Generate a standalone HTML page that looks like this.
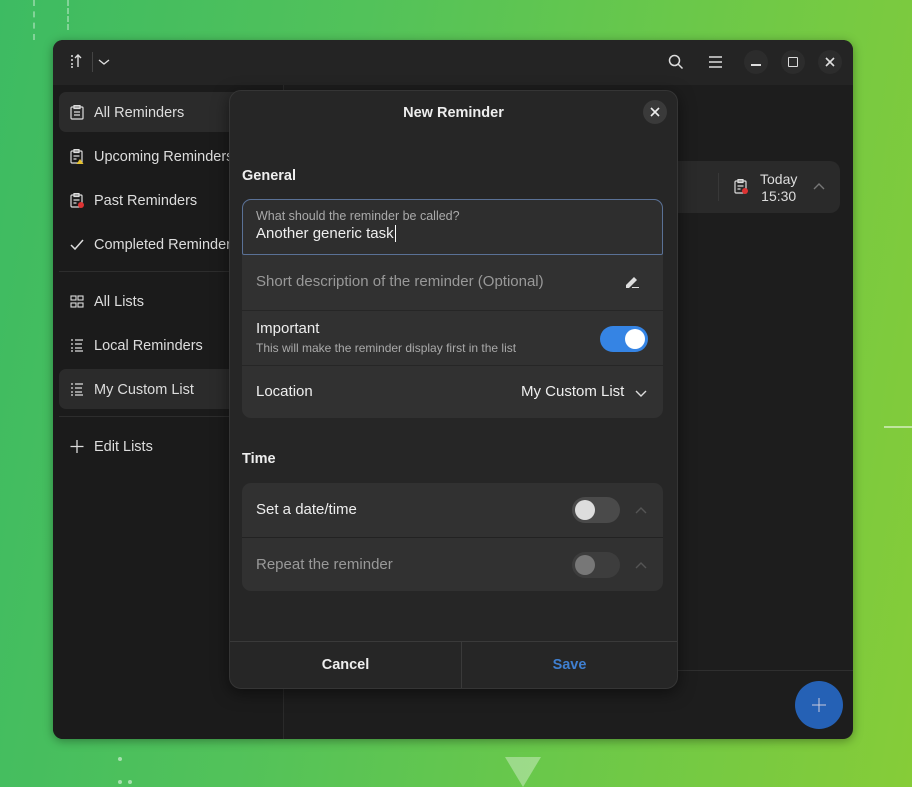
<!DOCTYPE html>
<html><head><meta charset="utf-8"><style>
*{box-sizing:border-box;margin:0;padding:0}
body{width:912px;height:787px;overflow:hidden;position:relative;font-family:"Liberation Sans","DejaVu Sans",sans-serif;background:linear-gradient(100deg,#3dbb62 0%,#52c25a 35%,#6ac84a 65%,#86cc38 100%);color:#fff}
.a{position:absolute}
.win{left:53px;top:40px;width:800px;height:699px;background:#1d1d1d;border-radius:10px;overflow:hidden;box-shadow:0 2px 10px rgba(0,0,0,.35)}
.hdr{left:0;top:0;width:800px;height:45px;background:#242424}
.side{left:0;top:45px;width:231px;height:654px;background:#1b1b1b;border-right:1px solid #2a2a2a}
.si{position:absolute;left:6px;width:224px;height:40px;border-radius:7px;font-size:14.5px;color:#ddd;line-height:42px;padding-left:35px}
.si.sel{background:#2b2b2b}
.ic{position:absolute;left:11px;top:13px;width:14px;height:15px}
.sep{position:absolute;left:6px;width:224px;height:1px;background:#2d2d2d}
.hb{position:absolute;width:24px;height:24px;border-radius:12px;background:#2c2c2c;top:10px}
.dlg{left:229px;top:90px;width:449px;height:599px;background:#262626;border-radius:12px;border:1px solid #353535;box-shadow:0 4px 16px rgba(0,0,0,.5)}
.card{position:absolute;left:13px;width:421px;background:#313131;border-radius:9px}
.row{position:absolute;left:0;width:421px;border-top:1px solid #262626}
.lbl{position:absolute;left:14px;font-size:15px;color:#eee}
.tog{position:absolute;width:48px;height:26px;border-radius:13px}
.knob{position:absolute;top:3px;width:20px;height:20px;border-radius:10px}
</style></head><body>
<div class="a" style="left:33px;top:0;width:3px;height:40px;border-left:2px dashed rgba(255,255,255,.35)"></div>
<div class="a" style="left:67px;top:0;width:3px;height:30px;border-left:2px dashed rgba(255,255,255,.35)"></div>
<div class="a" style="left:884px;top:426px;width:28px;height:2px;background:rgba(255,255,255,.5)"></div>
<div class="a" style="left:505px;top:757px;width:0;height:0;border-left:18px solid transparent;border-right:18px solid transparent;border-top:30px solid rgba(255,255,255,.35)"></div>
<div class="a" style="left:118px;top:757px;width:4px;height:4px;border-radius:2px;background:rgba(255,255,255,.5)"></div>
<div class="a" style="left:118px;top:780px;width:4px;height:4px;border-radius:2px;background:rgba(255,255,255,.5)"></div>
<div class="a" style="left:128px;top:780px;width:4px;height:4px;border-radius:2px;background:rgba(255,255,255,.5)"></div>

<div class="a win">
 <div class="a hdr">
  <svg class="a" style="left:16px;top:14px" width="14" height="14" viewBox="0 0 14 14" fill="none" stroke="#ddd" stroke-width="1.4"><path d="M2 2h2M2 6h2M2 10h2M2 13h2M9 13V1M6 4l3-3 3 3"/></svg>
  <div class="a" style="left:39px;top:12px;width:1px;height:20px;background:#444"></div>
  <svg class="a" style="left:45px;top:17px" width="12" height="10" viewBox="0 0 12 10" fill="none" stroke="#ddd" stroke-width="1.4"><path d="M1 3l5 4 5-4"/></svg>
  <svg class="a" style="left:615px;top:14px" width="16" height="16" viewBox="0 0 16 16" fill="none" stroke="#ddd" stroke-width="1.5"><circle cx="6.5" cy="6.5" r="5"/><path d="M10 10l4.5 4.5"/></svg>
  <svg class="a" style="left:656px;top:16px" width="13" height="12" viewBox="0 0 13 12" fill="none" stroke="#ddd" stroke-width="1.4"><path d="M0 1h13M0 6h13M0 11h13"/></svg>
  <div class="hb" style="left:691px"><div class="a" style="left:7px;top:14px;width:10px;height:1.5px;background:#ddd"></div></div>
  <div class="hb" style="left:728px"><div class="a" style="left:7px;top:7px;width:10px;height:10px;border:1.5px solid #ddd;border-radius:1px"></div></div>
  <div class="hb" style="left:765px"><svg class="a" style="left:7px;top:7px" width="10" height="10" viewBox="0 0 10 10" stroke="#ddd" stroke-width="1.6"><path d="M1 1l8 8M9 1l-8 8"/></svg></div>
 </div>
 <div class="a side">
  <div class="si sel" style="top:7px"><svg class="ic" viewBox="0 0 14 15" fill="none" stroke="#ddd" stroke-width="1.2"><rect x="1" y="2" width="12" height="12" rx="1"/><rect x="4" y="0.5" width="6" height="3"/><path d="M4 7h6M4 10h6"/></svg>All Reminders</div>
  <div class="si" style="top:51px"><svg class="ic" viewBox="0 0 14 15" fill="none" stroke="#ddd" stroke-width="1.2"><rect x="1" y="2" width="11" height="12" rx="1"/><rect x="4" y="0.5" width="5" height="3"/><path d="M3.5 7h6M3.5 10h3"/><path d="M10 10l3.5 5h-7z" fill="#e5c230" stroke="none"/></svg>Upcoming Reminders</div>
  <div class="si" style="top:95px"><svg class="ic" viewBox="0 0 14 15" fill="none" stroke="#ddd" stroke-width="1.2"><rect x="1" y="2" width="11" height="12" rx="1"/><rect x="4" y="0.5" width="5" height="3"/><path d="M3.5 7h6M3.5 10h3"/><circle cx="11" cy="12" r="3" fill="#d33" stroke="none"/></svg>Past Reminders</div>
  <div class="si" style="top:139px"><svg class="ic" viewBox="0 0 14 15" fill="none" stroke="#ddd" stroke-width="1.5"><path d="M1 8l4 4 8-9"/></svg>Completed Reminders</div>
  <div class="sep" style="top:186px"></div>
  <div class="si" style="top:196px"><svg class="ic" viewBox="0 0 14 15" fill="none" stroke="#ddd" stroke-width="1.1"><rect x="1" y="2" width="5" height="4"/><rect x="8" y="2" width="5" height="4"/><rect x="1" y="9" width="5" height="4"/><rect x="8" y="9" width="5" height="4"/></svg>All Lists</div>
  <div class="si" style="top:240px"><svg class="ic" viewBox="0 0 14 15" fill="none" stroke="#ddd" stroke-width="1.2"><path d="M1 2h2M1 6h2M1 10h2M1 13h2M5 2h8M5 6h7M5 10h7M5 13h8"/></svg>Local Reminders</div>
  <div class="si sel" style="top:284px"><svg class="ic" viewBox="0 0 14 15" fill="none" stroke="#ddd" stroke-width="1.2"><path d="M1 2h2M1 6h2M1 10h2M1 13h2M5 2h8M5 6h7M5 10h7M5 13h8"/></svg>My Custom List</div>
  <div class="sep" style="top:331px"></div>
  <div class="si" style="top:341px"><svg class="ic" viewBox="0 0 14 15" fill="none" stroke="#ddd" stroke-width="1.3"><path d="M7 1v13M0.5 7.5h13"/></svg>Edit Lists</div>
 </div>
 <div class="a" style="left:560px;top:121px;width:227px;height:52px;background:#2a2a2a;border-radius:10px">
  <div class="a" style="left:105px;top:12px;width:1px;height:28px;background:#383838"></div>
  <svg class="a" style="left:121px;top:18px" width="14" height="15" viewBox="0 0 14 15" fill="none" stroke="#ddd" stroke-width="1.2"><rect x="1" y="2" width="11" height="12" rx="1"/><rect x="4" y="0.5" width="5" height="3"/><path d="M3.5 7h6M3.5 10h3"/><circle cx="11" cy="12" r="3" fill="#d33" stroke="none"/></svg>
  <div class="a" style="left:147px;top:10px;font-size:14px;color:#ddd;line-height:17px;text-align:center">Today<br>15:30</div>
  <svg class="a" style="left:200px;top:21px" width="12" height="8" viewBox="0 0 12 8" fill="none" stroke="#777" stroke-width="1.4"><path d="M1 7l5-5 5 5"/></svg>
 </div>
 <div class="a" style="left:231px;top:630px;width:569px;height:1px;background:#2f2f2f"></div>
 <div class="a" style="left:742px;top:641px;width:48px;height:48px;border-radius:24px;background:#2561b5"><svg class="a" style="left:17px;top:17px" width="14" height="14" viewBox="0 0 14 14" stroke="#ccd" stroke-width="1"><path d="M7 0v14M0 7h14"/></svg></div>
</div>

<div class="a dlg">
 <div class="a" style="left:0;top:14px;width:447px;text-align:center;font-size:14.5px;font-weight:bold;color:#eee">New Reminder</div>
 <div class="a" style="left:413px;top:9px;width:24px;height:24px;border-radius:12px;background:#3a3a3a"><svg class="a" style="left:7px;top:7px" width="10" height="10" viewBox="0 0 10 10" stroke="#eee" stroke-width="1.6"><path d="M1 1l8 8M9 1l-8 8"/></svg></div>
 <div class="a" style="left:12px;top:77px;font-size:14.5px;font-weight:bold;color:#eee">General</div>
 <div class="card" style="top:108px;height:219px;left:12px">
  <div class="a" style="left:0;top:0;width:421px;height:56px;border:1.5px solid #5a7196;border-radius:9px 9px 2px 2px;background:#2e2e2e"></div>
  <div class="lbl" style="top:10px;font-size:12.5px;color:#aaa">What should the reminder be called?</div>
  <div class="lbl" style="top:26px">Another generic task<span style="border-left:1px solid #fff;margin-left:1px"></span></div>
  <div class="row" style="top:56px;height:55px;border-top:none"><div class="lbl" style="top:18px;color:#999">Short description of the reminder (Optional)</div>
   <svg class="a" style="left:382px;top:19px" width="16" height="15" viewBox="0 0 16 15" fill="#ddd"><path d="M2 11l8-8 3 3-8 8H2z"/><path d="M8 13.5h7" stroke="#ddd" stroke-width="1"/></svg></div>
  <div class="row" style="top:111px;height:55px"><div class="lbl" style="top:9px">Important</div><div class="lbl" style="top:30px;font-size:12px;color:#aaa">This will make the reminder display first in the list</div>
   <div class="tog" style="left:358px;top:15px;background:#3584e4"><div class="knob" style="left:25px;background:#fff"></div></div></div>
  <div class="row" style="top:166px;height:53px"><div class="lbl" style="top:17px">Location</div><div class="lbl" style="left:279px;top:17px">My Custom List</div>
   <svg class="a" style="left:393px;top:24px" width="12" height="8" viewBox="0 0 12 8" fill="none" stroke="#ddd" stroke-width="1.4"><path d="M1 1l5 5 5-5"/></svg></div>
 </div>
 <div class="a" style="left:12px;top:360px;font-size:14.5px;font-weight:bold;color:#eee">Time</div>
 <div class="card" style="top:392px;height:108px;left:12px">
  <div class="lbl" style="top:18px">Set a date/time</div>
  <div class="tog" style="left:330px;top:14px;background:#4a4a4a"><div class="knob" style="left:3px;background:#ddd"></div></div>
  <svg class="a" style="left:393px;top:23px" width="12" height="8" viewBox="0 0 12 8" fill="none" stroke="#555" stroke-width="1.4"><path d="M1 7l5-5 5 5"/></svg>
  <div class="row" style="top:54px;height:54px;border-top:1px solid #222"><div class="lbl" style="top:18px;color:#999">Repeat the reminder</div>
   <div class="tog" style="left:330px;top:14px;background:#3d3d3d"><div class="knob" style="left:3px;background:#777"></div></div>
   <svg class="a" style="left:393px;top:23px" width="12" height="8" viewBox="0 0 12 8" fill="none" stroke="#555" stroke-width="1.4"><path d="M1 7l5-5 5 5"/></svg></div>
 </div>
 <div class="a" style="left:0;top:550px;width:447px;height:1px;background:#3a3a3a"></div>
 <div class="a" style="left:231px;top:551px;width:1px;height:46px;background:#3a3a3a"></div>
 <div class="a" style="left:0;top:566px;width:231px;text-align:center;font-size:14.5px;font-weight:bold;color:#eee">Cancel</div>
 <div class="a" style="left:232px;top:566px;width:215px;text-align:center;font-size:14.5px;font-weight:bold;color:#3f7fd0">Save</div>
</div>
</body></html>
